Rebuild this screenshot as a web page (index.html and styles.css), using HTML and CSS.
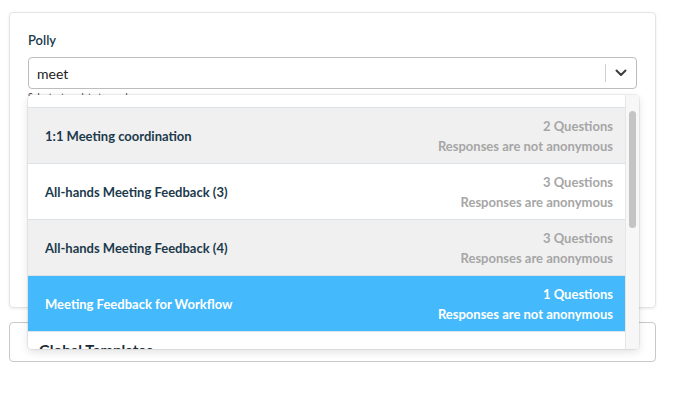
FILE: index.html
```html
<!DOCTYPE html>
<html lang="en">
<head>
  <meta charset="UTF-8" />
  <meta name="viewport" content="width=device-width, initial-scale=1" />
  <title>Polly templates</title>
  <link rel="stylesheet" href="styles.css">
</head>
<body>
  <div class="card">
    <label class="field-label" for="template">Polly</label>
    <div class="select">
      <div class="select-control">
        <input id="template" class="select-input" type="text" value="meet" />
        <span class="select-sep"></span>
        <span class="select-arrow">
          <svg width="12" height="8" viewBox="0 0 12 8"><path d="M1.5 1.5 L6 6 L10.5 1.5" fill="none" stroke="#3d3d3d" stroke-width="2" stroke-linecap="round" stroke-linejoin="round"/></svg>
        </span>
      </div>
      <p class="help">Select a template to send</p>

      <div class="menu">
        <div class="menu-list">
          <div class="option-tail"></div>
          <div class="option">
            <span class="option-name">1:1 Meeting coordination</span>
            <span class="option-meta">2 Questions<br>Responses are not anonymous</span>
          </div>
          <div class="option plain">
            <span class="option-name">All-hands Meeting Feedback (3)</span>
            <span class="option-meta">3 Questions<br>Responses are anonymous</span>
          </div>
          <div class="option">
            <span class="option-name">All-hands Meeting Feedback (4)</span>
            <span class="option-meta">3 Questions<br>Responses are anonymous</span>
          </div>
          <div class="option selected">
            <span class="option-name">Meeting Feedback for Workflow</span>
            <span class="option-meta">1 Questions<br>Responses are not anonymous</span>
          </div>
          <div class="group-title">Global Templates</div>
        </div>
        <div class="scrollbar"><div class="thumb"></div></div>
      </div>
    </div>
  </div>

  <div class="card small"></div>
</body>
</html>
```

FILE: styles.css
```css
* {
  box-sizing: border-box;
  font-family: Lato, "Noto Sans", sans-serif;
}

body {
  margin: 0;
  background: #fff;
  color: #1c3a4c;
}

.card {
  margin: 12px 32px 0 9px;
  height: 296px;
  padding: 19px 18px;
  border: 1px solid #e4e4e4;
  border-radius: 4px;
  box-shadow: 0 1px 3px rgba(0,0,0,0.08);
}

.card.small {
  margin-top: 14px;
  height: 38px;
  border-color: #c8c8c8;
  box-shadow: none;
}

.field-label {
  display: block;
  font-size: 13px;
  font-weight: 600;
  line-height: 16px;
  margin-bottom: 9px;
}

.select {
  position: relative;
}

.select-control {
  display: flex;
  align-items: center;
  height: 32px;
  border: 1px solid #bdbdbd;
  border-radius: 4px;
  background: #fff;
}

.select-input {
  flex: 1;
  border: none;
  outline: none;
  padding: 0 8px;
  font-size: 14px;
  color: #222;
  background: transparent;
}

.select-sep {
  width: 1px;
  height: 18px;
  background: #cfcfcf;
}

.select-arrow {
  width: 30px;
  display: flex;
  justify-content: center;
  align-items: center;
}

.help {
  margin: 2px 0 0;
  font-size: 9px;
  color: #333;
}

.menu {
  position: absolute;
  top: 38px;
  left: 0;
  width: calc(100% + 2px);
  height: 254px;
  display: flex;
  background: #fff;
  border-radius: 4px;
  box-shadow: 0 0 0 1px rgba(0,0,0,0.06), 0 3px 8px rgba(0,0,0,0.12);
  overflow: hidden;
}

.menu-list {
  flex: 1;
  overflow: hidden;
}

.option-tail {
  height: 13px;
  border-bottom: 1px solid #dde2e6;
}

.option {
  display: flex;
  justify-content: space-between;
  align-items: center;
  height: 56px;
  padding: 0 12px 0 17px;
  background: #f0f0f0;
  border-bottom: 1px solid #dde2e6;
}

.option.plain {
  background: #fff;
}

.option.selected {
  background: #44b9fb;
  color: #fff;
}

.option-name {
  font-size: 13px;
  font-weight: 700;
}

.option-meta {
  text-align: right;
  font-size: 13px;
  font-weight: 700;
  line-height: 20px;
  color: #a6a6a6;
}

.option.selected .option-meta {
  color: #fff;
}

.group-title {
  padding: 9px 11px;
  font-size: 15px;
  font-weight: 700;
  color: #1c2b36;
}

.scrollbar {
  width: 14px;
  background: #f7f7f7;
  border-left: 1px solid #e6e6e6;
  padding: 16px 3px 0 3px;
}

.thumb {
  height: 117px;
  background: #c4c4c4;
  border-radius: 4px;
}
```
